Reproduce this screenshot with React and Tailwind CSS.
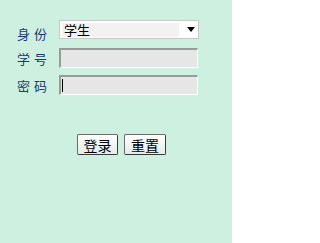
import React from 'react';

const App = () => {
  return (
    <div className="w-[232px] h-[243px] bg-[#cdf0e1] pt-[19px] pl-[17px]" style={{ fontFamily: '"Noto Sans CJK SC", sans-serif' }}>
      {/* Identity select */}
      <div className="flex items-center">
        <div className="w-[30px] flex justify-between text-[13px] leading-none text-[#1e3a6e] mt-[8px]">
          <span>身</span><span>份</span>
        </div>
        <div className="ml-[12px] w-[140px] h-[19px] bg-white border border-[#c8c8c8] flex items-center pl-[2px]">
          <div className="w-[117px] h-[14px] bg-[#f2f2f2] flex items-center pl-[2px] text-[13px] leading-none text-black">学生</div>
          <svg width="8" height="5" viewBox="0 0 8 5" className="ml-[8px]">
            <polygon points="0,0 8,0 4,5" fill="#000" />
          </svg>
        </div>
      </div>

      {/* Student number */}
      <div className="flex items-center mt-[8px]">
        <div className="w-[30px] flex justify-between text-[13px] leading-none text-[#1e3a6e]">
          <span>学</span><span>号</span>
        </div>
        <div className="ml-[12px] w-[139px] h-[20px] bg-[#e6e6e6] border-t-2 border-l-2 border-b border-r border-t-[#9a9a9a] border-l-[#9a9a9a] border-b-white border-r-white"></div>
      </div>

      {/* Password */}
      <div className="flex items-center mt-[7px]">
        <div className="w-[30px] flex justify-between text-[13px] leading-none text-[#1e3a6e]">
          <span>密</span><span>码</span>
        </div>
        <div className="ml-[12px] w-[139px] h-[20px] bg-[#e6e6e6] border-t-2 border-l-2 border-b border-r border-t-[#9a9a9a] border-l-[#9a9a9a] border-b-white border-r-white flex items-center pl-[1px]">
          <div className="w-[1px] h-[13px] bg-black"></div>
        </div>
      </div>

      {/* Buttons */}
      <div className="flex mt-[39px] pl-[60px] gap-[6px]">
        <button className="w-[41px] h-[21px] rounded-[2px] border border-[#6a6a6a] border-b-[#3a3a3a] border-r-[#3a3a3a] bg-gradient-to-b from-white to-[#e4eaea] text-[14px] leading-none text-black flex items-center justify-center">登录</button>
        <button className="w-[42px] h-[21px] rounded-[2px] border border-[#6a6a6a] border-b-[#3a3a3a] border-r-[#3a3a3a] bg-gradient-to-b from-white to-[#e4eaea] text-[14px] leading-none text-black flex items-center justify-center">重置</button>
      </div>
    </div>
  );
};

export default App;
